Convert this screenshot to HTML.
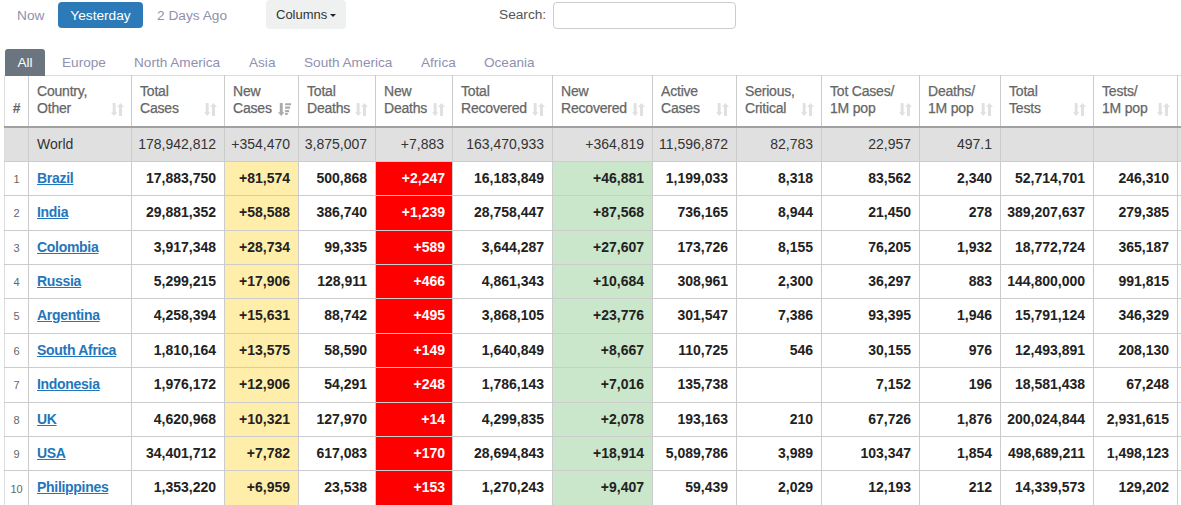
<!DOCTYPE html><html><head><meta charset="utf-8"><style>
*{box-sizing:border-box;margin:0;padding:0}
html,body{width:1181px;height:505px;overflow:hidden;background:#fff;font-family:"Liberation Sans",sans-serif}
.pill{position:absolute;top:2.5px;height:26px;font-size:13.7px;line-height:26px;color:#9090b0;white-space:nowrap}
.btnp{position:absolute;left:58px;top:2px;width:85px;height:26px;background:#2c7bb8;border-radius:4px;color:#fff;font-size:13.7px;line-height:27px;text-align:center}
.colbtn{position:absolute;left:266px;top:0;width:80px;height:29px;background:#eff0f0;border-radius:4px;color:#333;font-size:13px;line-height:30px;padding-left:10px}
.caret{position:absolute;left:64px;top:14px;width:0;height:0;border-left:3px solid transparent;border-right:3px solid transparent;border-top:3.5px solid #222}
.search{position:absolute;left:499px;top:2px;font-size:13.7px;line-height:26px;color:#555}
.inp{position:absolute;left:553px;top:2px;width:183px;height:27px;border:1px solid #ccc;border-radius:4px}
.tab{position:absolute;top:50px;height:26px;font-size:13.6px;line-height:26px;color:#9090b0;white-space:nowrap}
.tabact{position:absolute;z-index:3;left:5px;top:49px;width:40px;height:27px;background:#6a757f;border-radius:3px 3px 0 0;color:#fff;font-size:13.6px;line-height:28px;text-align:center}
table{position:absolute;left:4px;top:75px;border-collapse:collapse;table-layout:fixed}
td,th{border:1px solid #ccc;overflow:hidden;white-space:nowrap}
th{border-top-color:#ddd}
td:first-child,th:first-child{border-left-color:#ddd}
td.r{padding-right:7px}
th{height:51px;font-size:14px;line-height:17px;color:#666;-webkit-text-stroke:0.25px #666;letter-spacing:-0.2px;font-weight:normal;text-align:left;vertical-align:bottom;padding:0 0 9px 8px;position:relative;border-bottom:2px solid #a0a0a0}
th .si{position:absolute;right:7px;bottom:10px}
td{font-size:14px;font-weight:bold;color:#222;text-align:right;padding:0 8px 2px 0;vertical-align:middle}
tr.w td{background:#e0e0e0;font-weight:normal;color:#333;padding-bottom:0}
td.c{text-align:left;padding-left:8px}
td.n{text-align:center;font-weight:normal;font-size:11px;color:#666;padding:0}
td a{color:#2276bb;text-decoration:underline;letter-spacing:-0.3px}
td.y{background:#ffeeaa}
td.r{background:#f00;color:#fff}
td.g{background:#cae7cb}
</style></head><body>
<div class="pill" style="left:17px">Now</div>
<div class="btnp">Yesterday</div>
<div class="pill" style="left:157px">2 Days Ago</div>
<div class="colbtn">Columns<span class="caret"></span></div>
<div class="search">Search:</div><div class="inp"></div>
<div class="tabact">All</div>
<div class="tab" style="left:62px">Europe</div>
<div class="tab" style="left:134px">North America</div>
<div class="tab" style="left:249px">Asia</div>
<div class="tab" style="left:304px">South America</div>
<div class="tab" style="left:421px">Africa</div>
<div class="tab" style="left:484px">Oceania</div>
<table style="width:1273px"><colgroup><col style="width:24px"><col style="width:103px"><col style="width:93px"><col style="width:74px"><col style="width:77px"><col style="width:77px"><col style="width:100px"><col style="width:100px"><col style="width:84px"><col style="width:85px"><col style="width:98px"><col style="width:81px"><col style="width:93px"><col style="width:84px"><col style="width:100px"></colgroup>
<tr>
<th style="padding:0 0 9px 0;text-align:center;font-weight:bold;-webkit-text-stroke:0">#</th>
<th>Country,<br>Other<svg class="si" width="13" height="13" viewBox="0 0 13 13"><path fill="#e0e0e0" d="M1.7 0h2.9v9.3h1.7L3.15 13 0 9.3h1.7z M8 13h3V4h2L9.5 0 6 4h2z"/></svg></th>
<th>Total<br>Cases<svg class="si" width="13" height="13" viewBox="0 0 13 13"><path fill="#e0e0e0" d="M1.7 0h2.9v9.3h1.7L3.15 13 0 9.3h1.7z M8 13h3V4h2L9.5 0 6 4h2z"/></svg></th>
<th>New<br>Cases<svg class="si" width="13" height="13" viewBox="0 0 13 13"><path fill="#aaa" d="M1.8 0h2.9v9.3h1.6L3.25 13 0 9.3h1.8z M7.1 0.2h6v2.1h-6z M7.1 3.6h5v2.1h-5z M7.1 7.1h4v2.1h-4z M7.1 10.1h2.6v2h-2.6z"/></svg></th>
<th>Total<br>Deaths<svg class="si" width="13" height="13" viewBox="0 0 13 13"><path fill="#e0e0e0" d="M1.7 0h2.9v9.3h1.7L3.15 13 0 9.3h1.7z M8 13h3V4h2L9.5 0 6 4h2z"/></svg></th>
<th>New<br>Deaths<svg class="si" width="13" height="13" viewBox="0 0 13 13"><path fill="#e0e0e0" d="M1.7 0h2.9v9.3h1.7L3.15 13 0 9.3h1.7z M8 13h3V4h2L9.5 0 6 4h2z"/></svg></th>
<th>Total<br>Recovered<svg class="si" width="13" height="13" viewBox="0 0 13 13"><path fill="#e0e0e0" d="M1.7 0h2.9v9.3h1.7L3.15 13 0 9.3h1.7z M8 13h3V4h2L9.5 0 6 4h2z"/></svg></th>
<th>New<br>Recovered<svg class="si" width="13" height="13" viewBox="0 0 13 13"><path fill="#e0e0e0" d="M1.7 0h2.9v9.3h1.7L3.15 13 0 9.3h1.7z M8 13h3V4h2L9.5 0 6 4h2z"/></svg></th>
<th>Active<br>Cases<svg class="si" width="13" height="13" viewBox="0 0 13 13"><path fill="#e0e0e0" d="M1.7 0h2.9v9.3h1.7L3.15 13 0 9.3h1.7z M8 13h3V4h2L9.5 0 6 4h2z"/></svg></th>
<th>Serious,<br>Critical<svg class="si" width="13" height="13" viewBox="0 0 13 13"><path fill="#e0e0e0" d="M1.7 0h2.9v9.3h1.7L3.15 13 0 9.3h1.7z M8 13h3V4h2L9.5 0 6 4h2z"/></svg></th>
<th>Tot&nbsp;Cases/<br>1M pop<svg class="si" width="13" height="13" viewBox="0 0 13 13"><path fill="#e0e0e0" d="M1.7 0h2.9v9.3h1.7L3.15 13 0 9.3h1.7z M8 13h3V4h2L9.5 0 6 4h2z"/></svg></th>
<th>Deaths/<br>1M pop<svg class="si" width="13" height="13" viewBox="0 0 13 13"><path fill="#e0e0e0" d="M1.7 0h2.9v9.3h1.7L3.15 13 0 9.3h1.7z M8 13h3V4h2L9.5 0 6 4h2z"/></svg></th>
<th>Total<br>Tests<svg class="si" width="13" height="13" viewBox="0 0 13 13"><path fill="#e0e0e0" d="M1.7 0h2.9v9.3h1.7L3.15 13 0 9.3h1.7z M8 13h3V4h2L9.5 0 6 4h2z"/></svg></th>
<th>Tests/<br>1M pop<svg class="si" width="13" height="13" viewBox="0 0 13 13"><path fill="#e0e0e0" d="M1.7 0h2.9v9.3h1.7L3.15 13 0 9.3h1.7z M8 13h3V4h2L9.5 0 6 4h2z"/></svg></th>
<th>Population<svg class="si" width="13" height="13" viewBox="0 0 13 13"><path fill="#e0e0e0" d="M1.7 0h2.9v9.3h1.7L3.15 13 0 9.3h1.7z M8 13h3V4h2L9.5 0 6 4h2z"/></svg></th>
</tr>
<tr class="w" style="height:35px"><td class="n"></td><td class="c">World</td><td class="">178,942,812</td><td class="">+354,470</td><td class="">3,875,007</td><td class="">+7,883</td><td class="">163,470,933</td><td class="">+364,819</td><td class="">11,596,872</td><td class="">82,783</td><td class="">22,957</td><td class="">497.1</td><td class=""></td><td class=""></td><td class=""></td></tr>
<tr class="" style="height:34px"><td class="n">1</td><td class="c"><a>Brazil</a></td><td class="">17,883,750</td><td class="y">+81,574</td><td class="">500,868</td><td class="r">+2,247</td><td class="">16,183,849</td><td class="g">+46,881</td><td class="">1,199,033</td><td class="">8,318</td><td class="">83,562</td><td class="">2,340</td><td class="">52,714,701</td><td class="">246,310</td><td class=""></td></tr>
<tr class="" style="height:35px"><td class="n">2</td><td class="c"><a>India</a></td><td class="">29,881,352</td><td class="y">+58,588</td><td class="">386,740</td><td class="r">+1,239</td><td class="">28,758,447</td><td class="g">+87,568</td><td class="">736,165</td><td class="">8,944</td><td class="">21,450</td><td class="">278</td><td class="">389,207,637</td><td class="">279,385</td><td class=""></td></tr>
<tr class="" style="height:34px"><td class="n">3</td><td class="c"><a>Colombia</a></td><td class="">3,917,348</td><td class="y">+28,734</td><td class="">99,335</td><td class="r">+589</td><td class="">3,644,287</td><td class="g">+27,607</td><td class="">173,726</td><td class="">8,155</td><td class="">76,205</td><td class="">1,932</td><td class="">18,772,724</td><td class="">365,187</td><td class=""></td></tr>
<tr class="" style="height:34px"><td class="n">4</td><td class="c"><a>Russia</a></td><td class="">5,299,215</td><td class="y">+17,906</td><td class="">128,911</td><td class="r">+466</td><td class="">4,861,343</td><td class="g">+10,684</td><td class="">308,961</td><td class="">2,300</td><td class="">36,297</td><td class="">883</td><td class="">144,800,000</td><td class="">991,815</td><td class=""></td></tr>
<tr class="" style="height:35px"><td class="n">5</td><td class="c"><a>Argentina</a></td><td class="">4,258,394</td><td class="y">+15,631</td><td class="">88,742</td><td class="r">+495</td><td class="">3,868,105</td><td class="g">+23,776</td><td class="">301,547</td><td class="">7,386</td><td class="">93,395</td><td class="">1,946</td><td class="">15,791,124</td><td class="">346,329</td><td class=""></td></tr>
<tr class="" style="height:34px"><td class="n">6</td><td class="c"><a>South Africa</a></td><td class="">1,810,164</td><td class="y">+13,575</td><td class="">58,590</td><td class="r">+149</td><td class="">1,640,849</td><td class="g">+8,667</td><td class="">110,725</td><td class="">546</td><td class="">30,155</td><td class="">976</td><td class="">12,493,891</td><td class="">208,130</td><td class=""></td></tr>
<tr class="" style="height:35px"><td class="n">7</td><td class="c"><a>Indonesia</a></td><td class="">1,976,172</td><td class="y">+12,906</td><td class="">54,291</td><td class="r">+248</td><td class="">1,786,143</td><td class="g">+7,016</td><td class="">135,738</td><td class=""></td><td class="">7,152</td><td class="">196</td><td class="">18,581,438</td><td class="">67,248</td><td class=""></td></tr>
<tr class="" style="height:34px"><td class="n">8</td><td class="c"><a>UK</a></td><td class="">4,620,968</td><td class="y">+10,321</td><td class="">127,970</td><td class="r">+14</td><td class="">4,299,835</td><td class="g">+2,078</td><td class="">193,163</td><td class="">210</td><td class="">67,726</td><td class="">1,876</td><td class="">200,024,844</td><td class="">2,931,615</td><td class=""></td></tr>
<tr class="" style="height:34px"><td class="n">9</td><td class="c"><a>USA</a></td><td class="">34,401,712</td><td class="y">+7,782</td><td class="">617,083</td><td class="r">+170</td><td class="">28,694,843</td><td class="g">+18,914</td><td class="">5,089,786</td><td class="">3,989</td><td class="">103,347</td><td class="">1,854</td><td class="">498,689,211</td><td class="">1,498,123</td><td class=""></td></tr>
<tr class="" style="height:36px"><td class="n">10</td><td class="c" style="padding-bottom:4px"><a>Philippines</a></td><td class="" style="padding-bottom:4px">1,353,220</td><td class="y" style="padding-bottom:4px">+6,959</td><td class="" style="padding-bottom:4px">23,538</td><td class="r" style="padding-bottom:4px">+153</td><td class="" style="padding-bottom:4px">1,270,243</td><td class="g" style="padding-bottom:4px">+9,407</td><td class="" style="padding-bottom:4px">59,439</td><td class="" style="padding-bottom:4px">2,029</td><td class="" style="padding-bottom:4px">12,193</td><td class="" style="padding-bottom:4px">212</td><td class="" style="padding-bottom:4px">14,339,573</td><td class="" style="padding-bottom:4px">129,202</td><td class="" style="padding-bottom:4px"></td></tr>
</table></body></html>
